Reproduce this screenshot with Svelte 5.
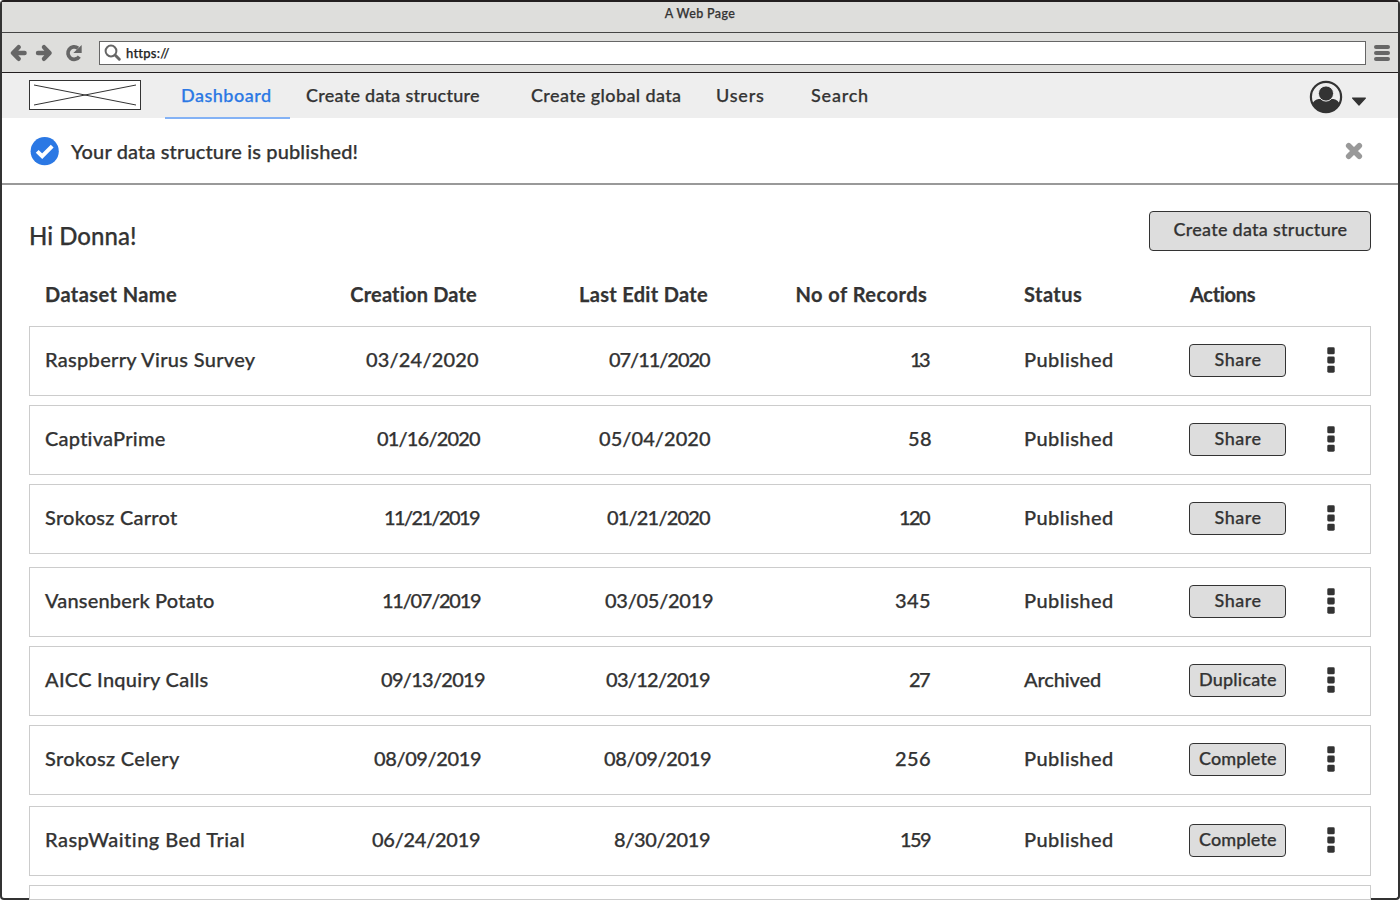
<script>
  const nav = [
    { label: 'Dashboard', width: 88, gap: 36, active: true },
    { label: 'Create data structure', width: 173, gap: 52 },
    { label: 'Create global data', width: 149, gap: 37 },
    { label: 'Users', width: 47, gap: 47 },
    { label: 'Search', width: 56, gap: 0 }
  ];

  // Each value is [text, width, inset from the column's right edge]
  const rows = [
    { name: ['Raspberry Virus Survey', 211], created: ['03/24/2020', 113, 1], edited: ['07/11/2020', 102, 0], records: ['13', 19, 1], status: ['Published', 87], action: ['Share', 46], gap: 0 },
    { name: ['CaptivaPrime', 120], created: ['01/16/2020', 104, -1], edited: ['05/04/2020', 112, 0], records: ['58', 22, 0], status: ['Published', 87], action: ['Share', 46], gap: 9 },
    { name: ['Srokosz Carrot', 133], created: ['11/21/2019', 95, 0], edited: ['01/21/2020', 104, 0], records: ['120', 31, 0], status: ['Published', 87], action: ['Share', 46], gap: 9 },
    { name: ['Vansenberk Potato', 169], created: ['11/07/2019', 98, -1], edited: ['03/05/2019', 108, -2], records: ['345', 35, 1], status: ['Published', 87], action: ['Share', 46], gap: 13 },
    { name: ['AICC Inquiry Calls', 163], created: ['09/13/2019', 104, -5], edited: ['03/12/2019', 104, 1], records: ['27', 21, 1], status: ['Archived', 76], action: ['Duplicate', 76], gap: 9 },
    { name: ['Srokosz Celery', 135], created: ['08/09/2019', 107, -1], edited: ['08/09/2019', 107, 0], records: ['256', 35, 1], status: ['Published', 87], action: ['Complete', 77], gap: 9 },
    { name: ['RaspWaiting Bed Trial', 199], created: ['06/24/2019', 108, 0], edited: ['8/30/2019', 96, 1], records: ['159', 30, 0], status: ['Published', 87], action: ['Complete', 77], gap: 11 }
  ];

  // Tracks the letters so that the visible text spans the given width
  function fit(node, width) {
    const style = getComputedStyle(node);
    const ctx = document.createElement('canvas').getContext('2d');
    ctx.font = `${style.fontWeight} ${style.fontSize} ${style.fontFamily}`;
    const text = node.textContent;
    const m = ctx.measureText(text);
    const ink = m.actualBoundingBoxLeft + m.actualBoundingBoxRight;
    const spacing = (width - ink) / (text.length - 1);
    const stem = /^[DHPR]/.test(text) ? 1 : 0;
    node.style.letterSpacing = `${spacing}px`;
    node.style.marginLeft = `${m.actualBoundingBoxLeft + stem}px`;
    node.style.marginRight = `${m.actualBoundingBoxRight - m.width - spacing}px`;
  }
</script>

{#snippet label(text, width)}
  <span class="label" use:fit={width}>{text}</span>
{/snippet}

<div class="window">
  <div class="titlebar">{@render label('A Web Page', 71)}</div>
  <div class="toolbar">
    <svg class="arrows" width="74" height="20" viewBox="0 0 74 20" fill="none" stroke="#666" stroke-width="4.4" stroke-linecap="round" stroke-linejoin="round">
      <path d="M8.6 4.2 3 10l5.6 5.8M4 10h10.6" />
      <path d="M34 4.2 39.6 10 34 15.8M38.6 10H28" />
      <path d="M69.3 13.6A6.2 6.2 0 1 1 68 5.2" stroke-width="3.7" stroke-linecap="butt" />
      <path d="M71.7 2v8h-8.4z" fill="#666" stroke="none" />
    </svg>
    <div class="address">
      <svg width="18" height="18" viewBox="0 0 18 18" fill="none" stroke="#666">
        <circle cx="7" cy="7" r="5.4" stroke-width="2" />
        <path d="m11.3 11.3 4 3.9" stroke-width="3" stroke-linecap="round" />
      </svg>
      {@render label('https://', 43)}
    </div>
    <svg class="burger" width="16" height="16" viewBox="0 0 16 16" stroke="#666" stroke-width="4" stroke-linecap="round">
      <path d="M2 2h12M2 8h12M2 14h12" />
    </svg>
  </div>

  <nav>
    <svg class="logo" width="112" height="30" viewBox="0 0 112 30">
      <rect x=".5" y=".5" width="111" height="29" fill="#fff" stroke="#333" />
      <path d="M5 5 107 25M5 25 107 5" stroke="#333" stroke-width="1" />
    </svg>
    <div class="links">
      {#each nav as item}
        <a class:active={item.active} style:margin-right="{item.gap - (item.active ? 20 : 0)}px">{@render label(item.label, item.width)}</a>
      {/each}
    </div>
    <svg class="user" width="58" height="34" viewBox="0 0 58 34">
      <defs><clipPath id="disc"><circle cx="17" cy="17" r="15" /></clipPath></defs>
      <circle cx="17" cy="17" r="15.1" fill="#eee" stroke="#333" stroke-width="2.2" />
      <g clip-path="url(#disc)">
        <path d="M3 34V25c1-3 3-5.5 6.500-6h15C28 19.500 30 22 31 25v9z" fill="#333" />
        <circle cx="17" cy="13.500" r="7.600" fill="#333" stroke="#eee" stroke-width="1" />
      </g>
      <path d="M43.600 18h12.800L50 25z" fill="#333" stroke="#333" stroke-width="1.200" stroke-linejoin="round" />
    </svg>
  </nav>

  <div class="notice">
    <svg width="30" height="30" viewBox="0 0 30 30">
      <circle cx="14.700" cy="15.200" r="14.100" fill="#2b78e4" />
      <path d="m7.200 15.400 5 4.800 10-10" fill="none" stroke="#fff" stroke-width="4" />
    </svg>
    {@render label('Your data structure is published!', 288)}
    <svg class="close" width="18" height="18" viewBox="0 0 18 18" stroke="#999" stroke-width="5.600" stroke-linecap="round">
      <path d="m3.700 3.700 10.600 10.600M14.300 3.700 3.700 14.300" />
    </svg>
  </div>

  <main>
    <header>
      <h1>{@render label('Hi Donna!', 104)}</h1>
      <button class="create">{@render label('Create data structure', 173)}</button>
    </header>

    <div class="columns head">
      <div>{@render label('Dataset Name', 131)}</div>
      <div class="num" style:padding-right="3px">{@render label('Creation Date', 127)}</div>
      <div class="num" style:padding-right="3px">{@render label('Last Edit Date', 128)}</div>
      <div class="num" style:padding-right="4px">{@render label('No of Records', 131)}</div>
      <div class="status">{@render label('Status', 58)}</div>
      <div>{@render label('Actions', 67)}</div>
    </div>

    {#each rows as row}
      <div class="columns row" style:margin-top="{row.gap}px">
        <div>{@render label(row.name[0], row.name[1])}</div>
        {#each [row.created, row.edited, row.records] as [text, width, inset]}
          <div class="num"><span class="inset" style:transform="translateX({-inset}px)">{@render label(text, width)}</span></div>
        {/each}
        <div class="status">{@render label(row.status[0], row.status[1])}</div>
        <button>{@render label(row.action[0], row.action[1])}</button>
        <svg class="dots" width="8" height="26" viewBox="0 0 8 26" fill="#333">
          <rect x=".3" y=".3" width="7.400" height="7" rx="1.400" />
          <rect x=".3" y="9.500" width="7.400" height="7" rx="1.400" />
          <rect x=".3" y="18.700" width="7.400" height="7" rx="1.400" />
        </svg>
      </div>
    {/each}
    <div class="row last"></div>
  </main>
</div>

<style>
  :global(body) {
    background: #fff;
    overflow: hidden;
  }
  .window {
    box-sizing: border-box;
    width: 1400px;
    height: 900px;
    border: 2px solid #333;
    border-top-color: #231f20;
    border-radius: 4px;
    background: #fff;
    color: #333;
    font: 500 20px/24px Lato, "Open Sans", sans-serif;
    font-kerning: normal;
  }
  .label {
    display: inline-block;
    white-space: nowrap;
    -webkit-text-stroke: 0.25px currentColor;
  }
  .titlebar {
    box-sizing: border-box;
    height: 31px;
    padding-top: 4px;
    border-bottom: 1px solid #444;
    background: #dededc;
    text-align: center;
    font-size: 12.5px;
    line-height: 16px;
  }
  .toolbar {
    box-sizing: border-box;
    display: flex;
    align-items: center;
    height: 40px;
    padding: 0 8px;
    border-bottom: 1px solid #231f20;
    background: #dededc;
  }
  .arrows {
    margin-right: 15px;
  }
  .address {
    box-sizing: border-box;
    display: flex;
    align-items: center;
    width: 1267px;
    height: 24px;
    padding-left: 4px;
    border: 1px solid #666;
    background: #fff;
    color: #222;
    font-size: 13px;
  }
  .address svg {
    margin-right: 4px;
  }
  .burger {
    margin-left: 8px;
  }
  nav {
    display: flex;
    height: 45px;
    padding: 0 31px 0 27px;
    background: #eee;
  }
  .logo {
    margin: 7px 24px 0 0;
  }
  .links {
    display: flex;
    flex: 1;
    font-size: 18px;
  }
  .links a {
    box-sizing: border-box;
    height: 46px;
    padding-top: 10px;
  }
  .links a.active {
    padding-left: 16px;
    padding-right: 20px;
    border-bottom: 2px solid #84b2f5;
    color: #2b78e4;
  }
  .user {
    margin-top: 7px;
  }
  .notice {
    box-sizing: border-box;
    display: flex;
    align-items: center;
    height: 67px;
    padding: 1px 35px 0 28px;
    border-bottom: 2px solid #999;
  }
  .notice > svg:first-child {
    margin: 0 10px 1px 0;
  }
  .notice .close {
    margin-left: auto;
  }
  main {
    padding: 26px 27px 0;
  }
  header {
    display: flex;
    justify-content: space-between;
    height: 71px;
  }
  h1 {
    margin: 10px 0 0 1px;
    font-size: 24px;
    font-weight: 500;
    line-height: 30px;
  }
  button {
    box-sizing: border-box;
    height: 33px;
    padding: 0 0 2px;
    border: 1px solid #333;
    border-radius: 4px;
    background: #ddd;
    color: #333;
    font: inherit;
    font-size: 18px;
    text-align: center;
  }
  .create {
    width: 222px;
    height: 40px;
    padding-bottom: 4px;
  }
  .columns {
    display: grid;
    grid-template-columns: 300px 135px 231px 220px 258px 97px 49px;
    align-items: center;
    padding-left: 15px;
  }
  .columns > div {
    padding-bottom: 2px;
  }
  .num {
    text-align: right;
  }
  .inset {
    display: inline-block;
  }
  .status {
    padding-left: 93px;
  }
  .head {
    height: 24px;
    margin-bottom: 20px;
    padding-left: 16px;
    font-weight: 700;
  }
  .row {
    box-sizing: border-box;
    height: 70px;
    padding-bottom: 2px;
    border: 1px solid #ccc;
    background: #fff;
  }
  .last {
    height: 15px;
    margin-top: 9px;
  }
  .dots {
    justify-self: end;
  }
</style>
